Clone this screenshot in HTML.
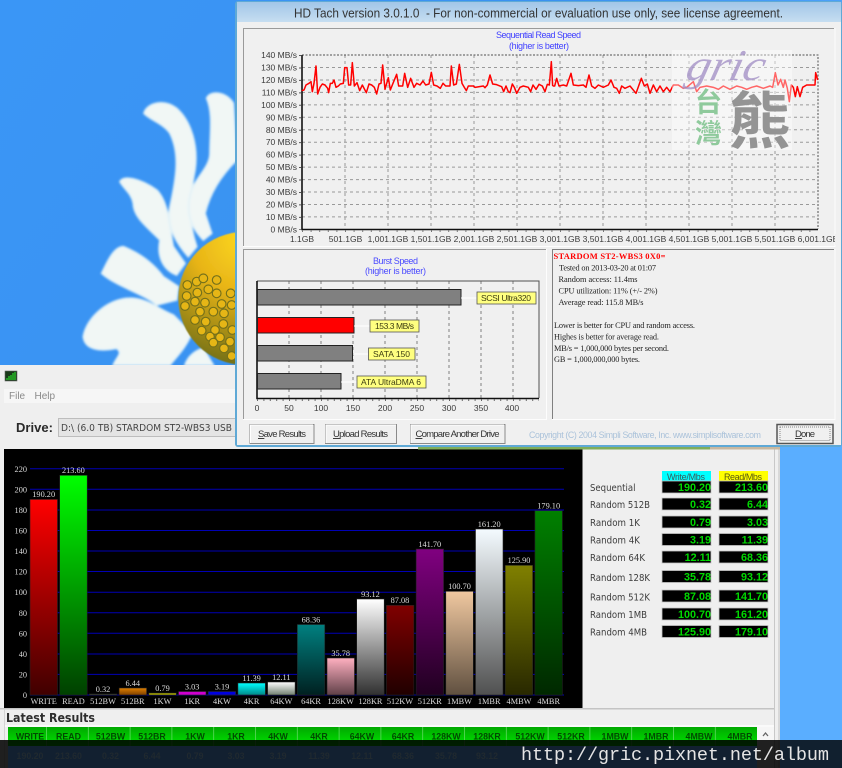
<!DOCTYPE html>
<html><head><meta charset="utf-8"><title>HD Tach</title>
<style>
html,body{margin:0;padding:0;background:#3c98f5;width:842px;height:768px;overflow:hidden}
svg{display:block;filter:blur(.36px)}
.s{font-family:"Liberation Sans",sans-serif}
.r{font-family:"Liberation Serif",serif}
.m{font-family:"Liberation Mono",monospace}
.d{font-family:"DejaVu Sans",sans-serif}
</style></head><body>
<svg width="842" height="768" viewBox="0 0 842 768" xmlns="http://www.w3.org/2000/svg">
<defs>
<linearGradient id="wp" x1="0" y1="0" x2="1" y2="0.6"><stop offset="0" stop-color="#3a96f6"/><stop offset=".5" stop-color="#3a92f0"/><stop offset=".95" stop-color="#5aaeff"/></linearGradient>
<linearGradient id="tb" x1="0" y1="0" x2="0" y2="1"><stop offset="0" stop-color="#a2c6e8"/><stop offset="1" stop-color="#c6def1"/></linearGradient>
<linearGradient id="gh" x1="0" y1="0" x2="0" y2="1"><stop offset="0" stop-color="#00a800"/><stop offset="1" stop-color="#00e800"/></linearGradient>
<radialGradient id="yl" cx=".5" cy=".05" r="1"><stop offset="0" stop-color="#fcd820"/><stop offset=".4" stop-color="#e8b418"/><stop offset="1" stop-color="#6a6a18"/></radialGradient>
<filter id="b1" x="-10%" y="-10%" width="120%" height="120%"><feGaussianBlur stdDeviation="3"/></filter>
<filter id="b2" x="-10%" y="-10%" width="120%" height="120%"><feGaussianBlur stdDeviation="1.6"/></filter>
<filter id="b3" x="-10%" y="-10%" width="120%" height="120%"><feGaussianBlur stdDeviation=".8"/></filter>
<linearGradient id="g0" x1="0" y1="0" x2="0" y2="1"><stop offset="0" stop-color="#ff0000"/><stop offset="1" stop-color="#400000"/></linearGradient>
<linearGradient id="g1" x1="0" y1="0" x2="0" y2="1"><stop offset="0" stop-color="#00ff00"/><stop offset="1" stop-color="#004000"/></linearGradient>
<linearGradient id="g3" x1="0" y1="0" x2="0" y2="1"><stop offset="0" stop-color="#e08000"/><stop offset="1" stop-color="#804000"/></linearGradient>
<linearGradient id="g7" x1="0" y1="0" x2="0" y2="1"><stop offset="0" stop-color="#00ffff"/><stop offset="1" stop-color="#008888"/></linearGradient>
<linearGradient id="g8" x1="0" y1="0" x2="0" y2="1"><stop offset="0" stop-color="#ffffff"/><stop offset="1" stop-color="#708070"/></linearGradient>
<linearGradient id="g9" x1="0" y1="0" x2="0" y2="1"><stop offset="0" stop-color="#008080"/><stop offset="1" stop-color="#002020"/></linearGradient>
<linearGradient id="g10" x1="0" y1="0" x2="0" y2="1"><stop offset="0" stop-color="#ffb0c0"/><stop offset="1" stop-color="#604048"/></linearGradient>
<linearGradient id="g11" x1="0" y1="0" x2="0" y2="1"><stop offset="0" stop-color="#ffffff"/><stop offset="1" stop-color="#303030"/></linearGradient>
<linearGradient id="g12" x1="0" y1="0" x2="0" y2="1"><stop offset="0" stop-color="#800000"/><stop offset="1" stop-color="#200000"/></linearGradient>
<linearGradient id="g13" x1="0" y1="0" x2="0" y2="1"><stop offset="0" stop-color="#800080"/><stop offset="1" stop-color="#200020"/></linearGradient>
<linearGradient id="g14" x1="0" y1="0" x2="0" y2="1"><stop offset="0" stop-color="#f0c8a0"/><stop offset="1" stop-color="#605040"/></linearGradient>
<linearGradient id="g15" x1="0" y1="0" x2="0" y2="1"><stop offset="0" stop-color="#f4fbff"/><stop offset="1" stop-color="#505050"/></linearGradient>
<linearGradient id="g16" x1="0" y1="0" x2="0" y2="1"><stop offset="0" stop-color="#808000"/><stop offset="1" stop-color="#282800"/></linearGradient>
<linearGradient id="g17" x1="0" y1="0" x2="0" y2="1"><stop offset="0" stop-color="#008000"/><stop offset="1" stop-color="#002800"/></linearGradient>
</defs>

<!-- wallpaper -->
<rect width="842" height="768" fill="url(#wp)"/>
<g transform="scale(.33333)">
 <g filter="url(#b1)" fill="#f1f7f5" stroke="#e2f2f8" stroke-width="5">
  <path d="M250 1010C260 950 330 890 400 895C450 900 480 930 520 945L575 1000C560 1040 530 1070 510 1095L340 1095C350 1070 370 1060 350 1045C300 1055 255 1050 250 1010Z"/>
  <path d="M305 820C320 790 340 740 370 740C420 760 460 790 490 830L535 860L530 900L470 915C430 880 350 860 305 820Z"/>
  <path d="M360 545C370 525 420 535 470 570C510 610 510 700 520 740L555 790L530 825C490 810 470 770 480 720C440 680 400 650 400 610C395 580 370 565 360 545Z"/>
  <path d="M432 340C440 310 490 295 530 325C575 365 595 440 585 510C570 590 560 650 590 740L565 770C520 720 500 670 510 620C530 530 540 460 510 400C490 370 450 360 432 340Z"/>
  <path d="M620 295C630 270 680 275 700 310L710 480C660 530 630 580 615 640L635 700L610 720C570 680 555 630 575 570C590 530 630 500 630 460C630 400 640 340 620 295Z"/>
  <path d="M555 1095C565 1065 590 1050 610 1045L640 1095Z"/>
 </g>
 <circle cx="735" cy="895" r="200" fill="url(#yl)" filter="url(#b2)"/>
 <g fill="#e6b614" stroke="#74701a" stroke-width="3.500" filter="url(#b3)">
  <circle cx="562" cy="855" r="13"/><circle cx="590" cy="845" r="13"/><circle cx="610" cy="835" r="13"/>
  <circle cx="625" cy="868" r="13"/><circle cx="592" cy="878" r="13"/><circle cx="560" cy="888" r="13"/><circle cx="585" cy="905" r="13"/>
  <circle cx="615" cy="908" r="13"/><circle cx="650" cy="880" r="13"/><circle cx="665" cy="912" r="13"/><circle cx="640" cy="935" r="13"/>
  <circle cx="600" cy="935" r="13"/><circle cx="555" cy="918" r="13"/><circle cx="585" cy="960" r="13"/><circle cx="617" cy="965" r="13"/>
  <circle cx="672" cy="940" r="13"/><circle cx="670" cy="972" r="13"/><circle cx="645" cy="990" r="13"/><circle cx="605" cy="992" r="13"/>
  <circle cx="630" cy="1010" r="13"/><circle cx="660" cy="1012" r="13"/><circle cx="690" cy="1025" r="13"/><circle cx="640" cy="1028" r="13"/>
  <circle cx="672" cy="1045" r="13"/><circle cx="695" cy="1068" r="13"/><circle cx="697" cy="990" r="13"/><circle cx="692" cy="880" r="13"/>
  <circle cx="650" cy="840" r="13"/><circle cx="695" cy="915" r="13"/>
 </g>
</g>

<!-- main window -->
<rect x="0" y="365" width="780" height="403" fill="#efefef"/>
<rect x="4" y="389" width="771" height="14" fill="#f6f6f6"/>
<rect x="5" y="371" width="12" height="10" fill="#1a3a1a" stroke="#666" stroke-width=".6"/>
<path d="M7 380V378M9 380V376M11 380V375M13 380V373M15 380V372" stroke="#2cd82c" stroke-width="1.2"/>
<text class="s" x="9" y="399" font-size="10" fill="#8a8a8a">File</text>
<text class="s" x="34.500" y="399" font-size="10" fill="#8a8a8a">Help</text>
<text class="s" x="16" y="432" font-size="13" font-weight="bold" fill="#2a2a2a" textLength="37">Drive:</text>
<rect x="58.500" y="418.500" width="180" height="18" fill="#e4e4e4" stroke="#bdbdbd"/>
<text class="d" x="61" y="431" font-size="9.500" fill="#444" textLength="171" lengthAdjust="spacingAndGlyphs">D:\ (6.0 TB) STARDOM ST2-WBS3 USB</text>
<rect x="774" y="403" width="1" height="365" fill="#c8c8c8"/>
<rect x="778" y="365" width="2" height="403" fill="#d8d8d8"/>

<!-- chart -->
<rect x="4" y="449" width="578.500" height="259" fill="#000"/>
<path d="M30 468.800H564M30 489.300H564M30 510H564M30 530.500H564M30 551H564M30 571.500H564M30 592.300H564M30 612.800H564M30 633.300H564M30 654H564M30 674.400H564M30 695H564" stroke="#0000b4" stroke-width="1"/>
<g class="r" font-size="8.300" fill="#d8d8d8" text-anchor="end">
<text x="27" y="472">220</text><text x="27" y="492.500">200</text><text x="27" y="513">180</text><text x="27" y="533.500">160</text><text x="27" y="554">140</text><text x="27" y="574.500">120</text><text x="27" y="595">100</text><text x="27" y="616">80</text><text x="27" y="636.500">60</text><text x="27" y="657">40</text><text x="27" y="677.500">20</text><text x="27" y="698">0</text>
</g>
<g stroke="#222" stroke-width=".6">
<rect x="30" y="499.400" width="27.500" height="195.600" fill="url(#g0)"/>
<rect x="59.700" y="475.300" width="27.500" height="219.700" fill="url(#g1)"/>
<rect x="89.400" y="694" width="27.500" height="1" fill="#4a5040"/>
<rect x="119.100" y="688" width="27.500" height="7" fill="url(#g3)"/>
<rect x="148.800" y="693" width="27.500" height="2" fill="#b0b000"/>
<rect x="178.500" y="691.500" width="27.500" height="3.500" fill="#d000d0"/>
<rect x="208.200" y="691.500" width="27.500" height="3.500" fill="#0000e0"/>
<rect x="237.900" y="683" width="27.500" height="12" fill="url(#g7)"/>
<rect x="267.600" y="682" width="27.500" height="13" fill="url(#g8)"/>
<rect x="297.300" y="624.500" width="27.500" height="70.500" fill="url(#g9)"/>
<rect x="327" y="658" width="27.500" height="37" fill="url(#g10)"/>
<rect x="356.700" y="599" width="27.500" height="96" fill="url(#g11)"/>
<rect x="386.400" y="605.300" width="27.500" height="89.700" fill="url(#g12)"/>
<rect x="416.100" y="549" width="27.500" height="146" fill="url(#g13)"/>
<rect x="445.800" y="591.300" width="27.500" height="103.700" fill="url(#g14)"/>
<rect x="475.500" y="529" width="27.500" height="166" fill="url(#g15)"/>
<rect x="505.200" y="565.300" width="27.500" height="129.700" fill="url(#g16)"/>
<rect x="534.900" y="510.700" width="27.500" height="184.300" fill="url(#g17)"/>
</g>
<g class="r" font-size="8.300" fill="#dcdcdc" text-anchor="middle">
<text x="43.700" y="497">190.20</text><text x="73.400" y="473">213.60</text><text x="103" y="692">0.32</text><text x="132.800" y="686">6.44</text><text x="162.500" y="691">0.79</text><text x="192.200" y="689.500">3.03</text><text x="222" y="689.500">3.19</text><text x="251.600" y="681">11.39</text><text x="281.300" y="680">12.11</text><text x="311" y="622.500">68.36</text><text x="340.700" y="656">35.78</text><text x="370.500" y="597">93.12</text><text x="400" y="603">87.08</text><text x="429.800" y="547">141.70</text><text x="459.500" y="589">100.70</text><text x="489.200" y="527">161.20</text><text x="519" y="563">125.90</text><text x="548.700" y="508.500">179.10</text>
<text x="43.700" y="704">WRITE</text><text x="73.400" y="704">READ</text><text x="103" y="704">512BW</text><text x="132.800" y="704">512BR</text><text x="162.500" y="704">1KW</text><text x="192.200" y="704">1KR</text><text x="222" y="704">4KW</text><text x="251.600" y="704">4KR</text><text x="281.300" y="704">64KW</text><text x="311" y="704">64KR</text><text x="340.700" y="704">128KW</text><text x="370.500" y="704">128KR</text><text x="400" y="704">512KW</text><text x="429.800" y="704">512KR</text><text x="459.500" y="704">1MBW</text><text x="489.200" y="704">1MBR</text><text x="519" y="704">4MBW</text><text x="548.700" y="704">4MBR</text>
</g>

<!-- right value table -->
<rect x="662" y="471" width="49" height="10" fill="#00ffff"/>
<rect x="719" y="471" width="49" height="10" fill="#ffff00"/>
<text class="s" x="667" y="480" font-size="9" fill="#3a5a5a" textLength="38">Write/Mbs</text>
<text class="s" x="724" y="480" font-size="9" fill="#5a5a10" textLength="38">Read/Mbs</text>
<g fill="#000" stroke="#c4c4c4" stroke-width=".8">
<rect x="662" y="481" width="49" height="12"/><rect x="719" y="481" width="49" height="12"/>
<rect x="662" y="498" width="49" height="12"/><rect x="719" y="498" width="49" height="12"/>
<rect x="662" y="516" width="49" height="12"/><rect x="719" y="516" width="49" height="12"/>
<rect x="662" y="533.500" width="49" height="12"/><rect x="719" y="533.500" width="49" height="12"/>
<rect x="662" y="551" width="49" height="12"/><rect x="719" y="551" width="49" height="12"/>
<rect x="662" y="570.500" width="49" height="12"/><rect x="719" y="570.500" width="49" height="12"/>
<rect x="662" y="590" width="49" height="12"/><rect x="719" y="590" width="49" height="12"/>
<rect x="662" y="608" width="49" height="12"/><rect x="719" y="608" width="49" height="12"/>
<rect x="662" y="625.500" width="49" height="12"/><rect x="719" y="625.500" width="49" height="12"/>
</g>
<g class="s" font-size="10.800" font-weight="bold" fill="#00d800" text-anchor="end">
<text x="711" y="491">190.20</text><text x="768" y="491">213.60</text>
<text x="711" y="508">0.32</text><text x="768" y="508">6.44</text>
<text x="711" y="526">0.79</text><text x="768" y="526">3.03</text>
<text x="711" y="543.500">3.19</text><text x="768" y="543.500">11.39</text>
<text x="711" y="561">12.11</text><text x="768" y="561">68.36</text>
<text x="711" y="580.500">35.78</text><text x="768" y="580.500">93.12</text>
<text x="711" y="600">87.08</text><text x="768" y="600">141.70</text>
<text x="711" y="618">100.70</text><text x="768" y="618">161.20</text>
<text x="711" y="635.500">125.90</text><text x="768" y="635.500">179.10</text>
</g>
<g class="d" font-size="9.300" fill="#3c3c3c">
<text x="590" y="491" textLength="45.500" lengthAdjust="spacingAndGlyphs">Sequential</text>
<text x="590" y="508" textLength="60" lengthAdjust="spacingAndGlyphs">Random 512B</text>
<text x="590" y="526" textLength="50" lengthAdjust="spacingAndGlyphs">Random 1K</text>
<text x="590" y="543.500" textLength="50" lengthAdjust="spacingAndGlyphs">Random 4K</text>
<text x="590" y="561" textLength="55" lengthAdjust="spacingAndGlyphs">Random 64K</text>
<text x="590" y="581" textLength="60" lengthAdjust="spacingAndGlyphs">Random 128K</text>
<text x="590" y="600.500" textLength="60" lengthAdjust="spacingAndGlyphs">Random 512K</text>
<text x="590" y="618" textLength="57" lengthAdjust="spacingAndGlyphs">Random 1MB</text>
<text x="590" y="635.500" textLength="57" lengthAdjust="spacingAndGlyphs">Random 4MB</text>
</g>

<!-- latest results -->
<rect x="0" y="708" width="774" height="1.500" fill="#c4c4c4"/>
<rect x="4" y="709" width="1" height="59" fill="#d4d4d4"/>
<text class="d" x="6" y="722" font-size="12.500" font-weight="bold" fill="#2e2e2e" textLength="89" lengthAdjust="spacingAndGlyphs">Latest Results</text>
<rect x="5" y="725" width="769" height="2" fill="#fafafa"/>
<rect x="757" y="727" width="17" height="41" fill="#f6f6f6"/>
<path d="M763 736L765.500 733L768 736" fill="none" stroke="#666" stroke-width="1.300"/>
<rect x="8" y="727" width="749" height="20" fill="url(#gh)"/>
<path d="M46.500 727V747M88.300 727V747M130.100 727V747M171.900 727V747M213.700 727V747M255.500 727V747M297.300 727V747M339.100 727V747M380.900 727V747M422.700 727V747M464.500 727V747M506.300 727V747M548.100 727V747M589.900 727V747M631.700 727V747M673.500 727V747M715.300 727V747" stroke="#5fd85f" stroke-width=".8"/>
<g class="s" font-size="8.800" font-weight="bold" fill="#004a00" text-anchor="middle">
<text x="30" y="739.500">WRITE</text><text x="68.500" y="739.500">READ</text><text x="110.500" y="739.500">512BW</text><text x="152" y="739.500">512BR</text><text x="195" y="739.500">1KW</text><text x="236" y="739.500">1KR</text><text x="278" y="739.500">4KW</text><text x="319" y="739.500">4KR</text><text x="362" y="739.500">64KW</text><text x="403" y="739.500">64KR</text><text x="446" y="739.500">128KW</text><text x="487" y="739.500">128KR</text><text x="530" y="739.500">512KW</text><text x="571" y="739.500">512KR</text><text x="615" y="739.500">1MBW</text><text x="656" y="739.500">1MBR</text><text x="699" y="739.500">4MBW</text><text x="740" y="739.500">4MBR</text>
</g>

<!-- strip behind HD Tach -->
<rect x="418" y="446" width="292" height="3.500" fill="#7fae5a"/>
<rect x="710" y="446" width="70" height="3.500" fill="#c8b8a0"/>

<!-- HD Tach window -->
<rect x="235" y="1" width="607" height="446" rx="3" fill="#5fa9d6"/>
<rect x="237" y="22" width="604" height="423" fill="#f0f0f0"/>
<rect x="237" y="2" width="604" height="20" fill="url(#tb)"/>
<text class="s" x="294" y="17.500" font-size="12.500" fill="#333" textLength="489" lengthAdjust="spacingAndGlyphs" xml:space="preserve">HD Tach version 3.0.1.0  - For non-commercial or evaluation use only, see license agreement.</text>

<!-- sequential panel -->
<path d="M243.500 246V28.500H834" fill="none" stroke="#9a9a9a"/>
<path d="M243 246.500H835V28" fill="none" stroke="#fdfdfd"/>
<text class="s" x="496" y="38" font-size="9" fill="#4040ff" textLength="85">Sequential Read Speed</text>
<text class="s" x="509" y="49" font-size="9" fill="#4040ff" textLength="60">(higher is better)</text>
<path d="M302 67.500H818M302 80H818M302 92.400H818M302 104.900H818M302 117.300H818M302 129.800H818M302 142.200H818M302 154.700H818M302 167.100H818M302 179.600H818M302 192H818M302 204.500H818M302 216.900H818M345 55V229M388 55V229M431 55V229M474 55V229M517 55V229M560 55V229M603 55V229M646 55V229M689 55V229M732 55V229M775 55V229" stroke="#999" stroke-width="1" stroke-dasharray="3 3" fill="none"/>
<path d="M302 55H818V229" fill="none" stroke="#505050" stroke-dasharray="2 1.500"/>
<path d="M302 55V229.500H818" fill="none" stroke="#111" stroke-width="1.600"/>
<path d="M300 55V230" stroke="#555" stroke-width="2" stroke-dasharray="1 11.450"/>
<path d="M302 231H818" stroke="#777" stroke-width="2" stroke-dasharray="1 7.600"/>
<g class="s" font-size="8.500" fill="#3a3a3a" text-anchor="end">
<text x="297" y="58">140 MB/s</text><text x="297" y="70.500">130 MB/s</text><text x="297" y="83">120 MB/s</text><text x="297" y="95.400">110 MB/s</text><text x="297" y="107.900">100 MB/s</text><text x="297" y="120.300">90 MB/s</text><text x="297" y="132.800">80 MB/s</text><text x="297" y="145.200">70 MB/s</text><text x="297" y="157.700">60 MB/s</text><text x="297" y="170.100">50 MB/s</text><text x="297" y="182.600">40 MB/s</text><text x="297" y="195">30 MB/s</text><text x="297" y="207.500">20 MB/s</text><text x="297" y="219.900">10 MB/s</text><text x="297" y="232.400">0 MB/s</text>
</g>
<g class="s" font-size="8.500" fill="#3a3a3a" text-anchor="middle">
<text x="302" y="242">1.1GB</text><text x="345.500" y="242">501.1GB</text><text x="388" y="242">1,001.1GB</text><text x="431" y="242">1,501.1GB</text><text x="474" y="242">2,001.1GB</text><text x="517" y="242">2,501.1GB</text><text x="560" y="242">3,001.1GB</text><text x="603" y="242">3,501.1GB</text><text x="646" y="242">4,001.1GB</text><text x="689" y="242">4,501.1GB</text><text x="732" y="242">5,001.1GB</text><text x="775" y="242">5,501.1GB</text><text x="818" y="242">6,001.1GB</text>
</g>
<rect x="835" y="234" width="6" height="11" fill="#f0f0f0"/>
<g fill="none" stroke="#ff0000" stroke-width="4.500" stroke-linejoin="round">
<polyline transform="translate(235,0) scale(.33333)" points="200,272 207,270 213,255 222,250 228,245 232,275 237,250 243,198 248,282 255,262 262,252 270,255 278,265 281,278 286,250 292,250 297,240 303,262 310,258 316,252 325,250 329,203 336,203 341,255 347,255 352,188 358,258 366,248 374,272 382,255 394,278 402,252 410,255 418,262 425,282 432,252 438,250 443,195 450,268 460,233 466,270 474,250 485,223 491,258 503,258 509,220 518,262 527,235 537,262 545,250 555,255 564,243 572,255 582,252 589,217 596,255 606,258 616,265 624,250 632,258 645,258 649,198 656,255 664,252 673,193 681,250 688,262 694,272 700,258 715,258 720,262 745,258 750,263 757,255 765,225 773,252 785,254 800,260 806,275 813,258 820,275 825,278 832,252 838,262 845,280 855,262 865,258 880,262 887,275 894,255 903,268 912,253 922,258 930,275 937,253 943,255 949,185 953,258"/>
<polyline transform="translate(550,0) scale(.33333)" points="8,258 14,258 20,235 27,258 40,255 50,258 63,220 70,255 85,257 100,255 108,262 117,225 125,258 135,265 145,255 160,262 175,255 183,240 192,262 200,265 208,280 215,258 225,265 240,258 258,280 274,235 283,258 292,252 300,280 310,255 320,275 330,258 340,275 350,262 360,275 370,255 385,255 400,265 410,262 430,245 440,275 450,262 470,258 490,262 505,268 520,258 540,268 560,258 575,262 590,268 605,262 620,258 640,265 660,258 668,262 676,218 684,255 692,238 700,262 705,240 712,265 718,305 724,255 730,262 736,290 742,260 750,290 758,262 770,255 780,255 795,255 797,218 803,240"/>
</g>
<!-- watermark -->
<rect x="672" y="50" width="120" height="100" fill="#fff" opacity=".4"/>
<text class="r" transform="translate(684,80) skewX(-14)" x="0" y="0" font-size="44" font-style="italic" fill="#a08cc4" opacity=".75" textLength="78" lengthAdjust="spacingAndGlyphs">gric</text>
<text x="695" y="112" font-size="27" font-weight="bold" fill="#8fca9c" font-family="'Noto Sans CJK TC',sans-serif">台</text>
<text x="695" y="143" font-size="27" font-weight="bold" fill="#8fca9c" font-family="'Noto Sans CJK TC',sans-serif">灣</text>
<text x="729" y="143" font-size="62" font-weight="bold" fill="#949494" font-family="'Noto Sans CJK TC',sans-serif">熊</text>

<!-- burst panel -->
<path d="M243.500 419V249.500H546" fill="none" stroke="#9a9a9a"/>
<path d="M243 419.500H546.500V249" fill="none" stroke="#fdfdfd"/>
<text class="s" x="373" y="264" font-size="9" fill="#4a4aff" textLength="45">Burst Speed</text>
<text class="s" x="365" y="274" font-size="9" fill="#4a4aff" textLength="61">(higher is better)</text>
<path d="M289 281V398M321 281V398M353 281V398M385 281V398M417 281V398M449 281V398M481 281V398M513 281V398" stroke="#808080" stroke-dasharray="3 3"/>
<path d="M257 281H539V398" fill="none" stroke="#505050"/>
<path d="M257 281V398.500H539" fill="none" stroke="#111" stroke-width="1.600"/>
<path d="M257 400H539" stroke="#666" stroke-width="2" stroke-dasharray="1 5.400"/>
<g stroke="#222" stroke-width="1">
<rect x="257.500" y="289.500" width="203.500" height="15.500" fill="#808080"/>
<rect x="257.500" y="317.500" width="96.500" height="15.500" fill="#ff0000"/>
<rect x="257.500" y="345.500" width="95" height="15.500" fill="#808080"/>
<rect x="257.500" y="373.500" width="83.500" height="15.500" fill="#808080"/>
</g>
<path d="M461 298H477M354 326H370M353 354H368M341 382H357" stroke="#fff"/>
<g fill="#ffff80" stroke="#555" stroke-width=".8">
<rect x="477" y="292" width="59" height="12"/><rect x="370" y="320" width="49" height="12"/><rect x="368.500" y="348" width="46.500" height="12"/><rect x="357" y="376" width="69" height="12"/>
</g>
<g class="s" font-size="8.500" fill="#3c3c10">
<text x="481" y="301" textLength="50">SCSI Ultra320</text>
<text x="375" y="329" textLength="39">153.3 MB/s</text>
<text x="373" y="357" textLength="37">SATA 150</text>
<text x="361" y="385" textLength="60">ATA UltraDMA 6</text>
</g>
<g class="s" font-size="8.500" fill="#3a3a3a" text-anchor="middle">
<text x="257" y="411">0</text><text x="289" y="411">50</text><text x="321" y="411">100</text><text x="353" y="411">150</text><text x="385" y="411">200</text><text x="417" y="411">250</text><text x="449" y="411">300</text><text x="481" y="411">350</text><text x="512" y="411">400</text>
</g>

<!-- info panel -->
<path d="M552.500 419V249.500H834" fill="none" stroke="#808080"/>
<path d="M552 419.500H835V249" fill="none" stroke="#fdfdfd"/>
<text class="r" x="553.500" y="259" font-size="8.500" font-weight="bold" fill="#ff0000" textLength="112">STARDOM ST2-WBS3 0X0=</text>
<g class="r" font-size="8.300" fill="#222">
<text x="559" y="270.500" textLength="97">Tested on 2013-03-20 at 01:07</text>
<text x="558.500" y="282" textLength="79">Random access: 11.4ms</text>
<text x="558.500" y="293.500" textLength="99">CPU utilization: 11% (+/- 2%)</text>
<text x="558.500" y="305" textLength="85">Average read: 115.8 MB/s</text>
<text x="554" y="328" textLength="141">Lower is better for CPU and random access.</text>
<text x="554" y="339.500" textLength="105">Highes is better for average read.</text>
<text x="554" y="351" textLength="115">MB/s = 1,000,000 bytes per second.</text>
<text x="554" y="362" textLength="86">GB = 1,000,000,000 bytes.</text>
</g>

<!-- buttons -->
<g fill="#f0f0f0" stroke="#8a8a8a" stroke-width="1">
<rect x="250" y="424.500" width="64" height="19"/><rect x="325.500" y="424.500" width="71" height="19"/><rect x="410.500" y="424.500" width="94.500" height="19"/><rect x="777" y="424.500" width="56" height="19" stroke="#555" stroke-width="1.500"/>
</g>
<rect x="780" y="427" width="50" height="13.500" fill="none" stroke="#888" stroke-dasharray="1 1"/>
<path d="M250.500 443V425H313M326 443V425H396M411 443V425H504" fill="none" stroke="#fff"/>
<g class="s" font-size="9.500" fill="#333">
<text x="258" y="437" textLength="48"><tspan text-decoration="underline">S</tspan>ave Results</text>
<text x="333" y="437" textLength="55"><tspan text-decoration="underline">U</tspan>pload Results</text>
<text x="415.500" y="437" textLength="84"><tspan text-decoration="underline">C</tspan>ompare Another Drive</text>
<text x="795" y="437" textLength="20"><tspan text-decoration="underline">D</tspan>one</text>
</g>
<text class="s" x="529" y="438" font-size="8.800" fill="#aac2da" textLength="232">Copyright (C) 2004 Simpli Software, Inc. www.simplisoftware.com</text>

<!-- bottom overlay -->
<rect x="0" y="740" width="842" height="28" fill="#000" opacity=".87"/>
<rect x="8" y="746" width="749" height="22" fill="#122030"/>
<rect x="780" y="740" width="62" height="28" fill="#11202f"/>
<g class="s" font-size="8.800" font-weight="bold" fill="#20292f" text-anchor="middle">
<text x="30" y="759">190.20</text><text x="68.500" y="759">213.60</text><text x="110.500" y="759">0.32</text><text x="152" y="759">6.44</text><text x="195" y="759">0.79</text><text x="236" y="759">3.03</text><text x="278" y="759">3.19</text><text x="319" y="759">11.39</text><text x="362" y="759">12.11</text><text x="403" y="759">68.36</text><text x="446" y="759">35.78</text><text x="487" y="759">93.12</text>
</g>
<text class="m" x="521" y="760" font-size="18.500" fill="#e4e4e4" textLength="308">http://gric.pixnet.net/album</text>
</svg>
</body></html>
